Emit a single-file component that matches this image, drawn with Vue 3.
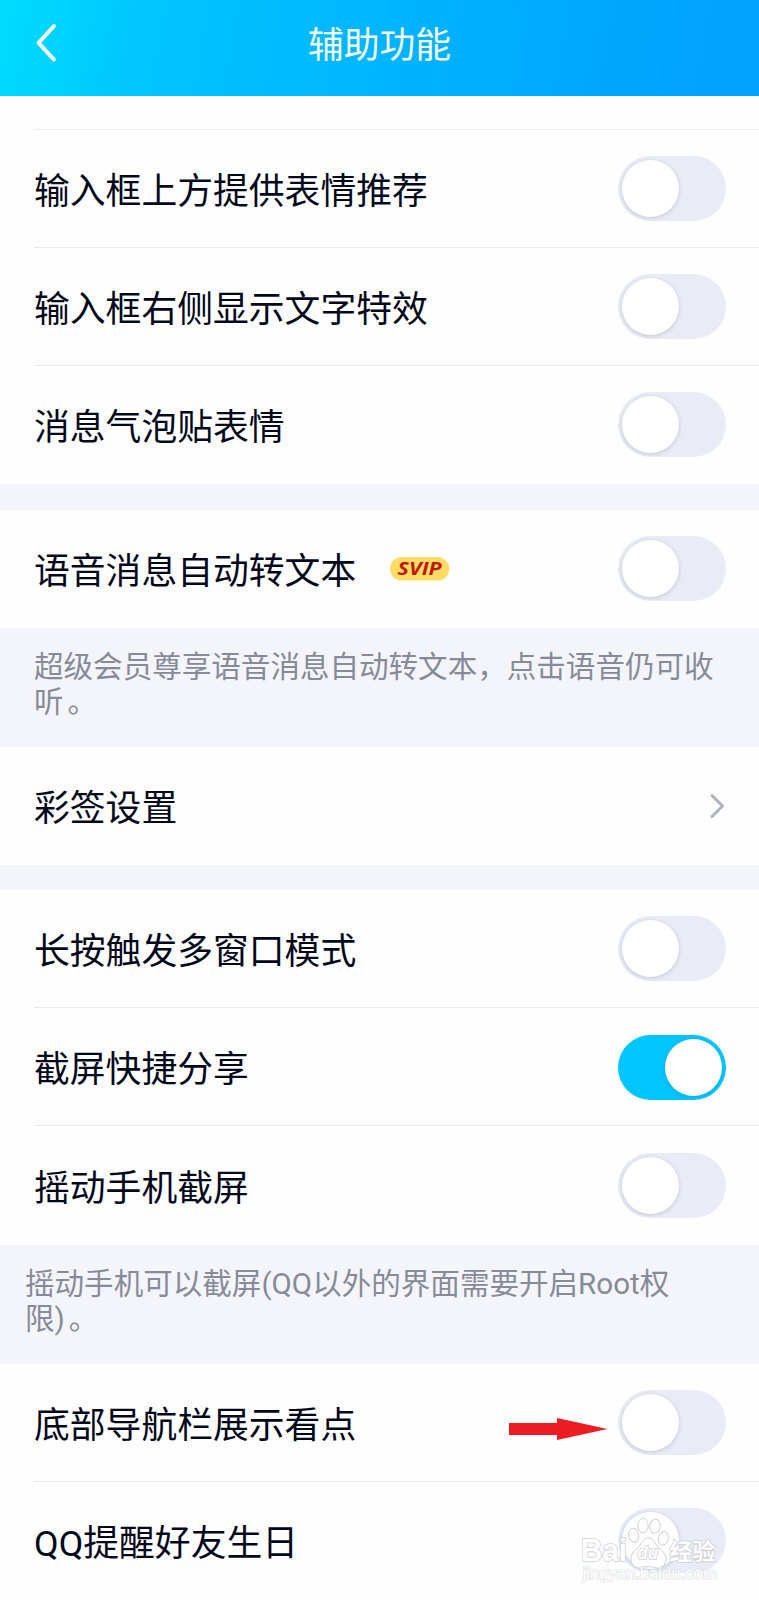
<script setup>
const sections = [
  {
    rows: [
      { label: '输入框上方提供表情推荐', line: true },
      { label: '输入框右侧显示文字特效', line: true },
      { label: '消息气泡贴表情' },
    ],
    gap: true,
  },
  {
    rows: [{ label: '语音消息自动转文本', svip: true }],
    note: ['超级会员尊享语音消息自动转文本，点击语音仍可收', '听'],
  },
  { rows: [{ label: '彩签设置', link: true }], gap: true },
  {
    rows: [
      { label: '长按触发多窗口模式', line: true },
      { label: '截屏快捷分享', on: true, line: true },
      { label: '摇动手机截屏', tall: true },
    ],
    note: ['摇动手机可以截屏(QQ以外的界面需要开启Root权', '限)'],
    wide: true,
  },
  {
    rows: [
      { label: '底部导航栏展示看点', arrow: true, line: true },
      { label: 'QQ提醒好友生日', watermark: true },
    ],
  },
]
</script>

<template>
  <div class="page">
    <header class="bar">
      <svg class="back" width="26" height="42" viewBox="0 0 26 42">
        <path d="M22 4 L6.6 20.8 L22 37.6" />
      </svg>
      <h1>辅助功能</h1>
    </header>
    <div class="top-space"><i></i></div>

    <section v-for="(s, i) in sections" :key="i">
      <div
        v-for="r in s.rows"
        :key="r.label"
        class="row"
        :class="{ line: r.line, tall: r.tall }"
      >
        <span class="label">{{ r.label }}</span>
        <svg v-if="r.svip" class="svip" width="60" height="24" viewBox="0 0 60 24">
          <rect x="0" y="0" width="59.3" height="23.6" rx="11.8" fill="#ffdc66" />
          <text x="7.6" y="18" textLength="44" lengthAdjust="spacingAndGlyphs">SVIP</text>
        </svg>
        <span class="spacer"></span>
        <svg v-if="r.arrow" class="arrow" width="99" height="24" viewBox="0 0 99 24">
          <path d="M0 6 H48 V1 L98.5 12 L48 23 V18 H0 Z" fill="#ed1c24" />
        </svg>
        <svg v-if="r.link" class="next" width="18" height="28" viewBox="0 0 18 28">
          <path d="M4 3.5 L14.5 14 L4 24.5" />
        </svg>
        <span v-else class="toggle" :class="{ on: r.on }"><b></b></span>

        <svg v-if="r.watermark" class="mark" width="142" height="76" viewBox="0 0 142 76">
          <g class="paw">
            <ellipse cx="52.7" cy="25.3" rx="5" ry="7" transform="rotate(-12 52.7 25.3)" />
            <ellipse cx="62" cy="15.6" rx="5.2" ry="7.2" />
            <ellipse cx="74" cy="16.2" rx="5.2" ry="7.2" transform="rotate(8 74 16.2)" />
            <ellipse cx="82.3" cy="28.3" rx="5" ry="6.8" transform="rotate(14 82.3 28.3)" />
            <path d="M67.3 28 C61.5 28 60.5 34.5 56.5 38 C52.5 41.5 49.5 44.5 50 50 C51 57 56 59 61 57.5 C65.5 56.3 69 56.3 73.5 57.5 C79 59 84 57 85 50 C85.5 44.5 82 41.5 78 38 C74 34.5 73 28 67.3 28 Z" />
          </g>
          <text class="brand" x="0" y="50.5" textLength="46" lengthAdjust="spacingAndGlyphs">Bai</text>
          <text class="du" x="56.5" y="48.7" textLength="20.5" lengthAdjust="spacingAndGlyphs">du</text>
          <text class="cn" x="88.5" y="49.5" textLength="46" lengthAdjust="spacingAndGlyphs">经验</text>
          <text class="url" x="1.5" y="68.5" textLength="134" lengthAdjust="spacingAndGlyphs">jingyan.baidu.com</text>
        </svg>
      </div>
      <div v-if="s.note" class="note" :class="{ wide: s.wide }">
        <p>{{ s.note[0] }}</p>
        <p>{{ s.note[1] }}<span class="stop">。</span></p>
      </div>
      <div v-if="s.gap" class="gap" :class="{ first: i === 0 }"></div>
    </section>
  </div>
</template>

<style>
html,
body {
  margin: 0;
  overflow: hidden;
}
</style>

<style scoped>
.page {
  width: 759px;
  height: 1600px;
  overflow: hidden;
  background: #fefefe;
  color: #03081a;
  font-family: Roboto, 'Noto Sans CJK SC', sans-serif;
}
.bar {
  height: 96px;
  box-sizing: border-box;
  display: grid;
  grid-template-columns: 120px 1fr 120px;
  align-items: center;
  background: linear-gradient(100deg, #00dcff 0%, #00c5ff 20%, #00b6ff 48%, #00a6ff 80%, #00a3ff 100%);
}
.back {
  margin: -11px 0 0 32px;
}
.back path {
  fill: none;
  stroke: #f2fdff;
  stroke-width: 4;
  stroke-linecap: round;
  stroke-linejoin: round;
}
.bar h1 {
  margin: 0;
  padding-bottom: 4px;
  text-align: center;
  font-size: 35.8px;
  line-height: 52px;
  font-weight: 400;
  color: #f4fdff;
}
.top-space {
  height: 34px;
  display: flex;
  align-items: flex-end;
}
.top-space i {
  flex: 1;
  margin-left: 34px;
  height: 1px;
  background: #e9e9eb;
}
.row {
  position: relative;
  height: 118px;
  box-sizing: border-box;
  margin-left: 34px;
  padding-right: 33.5px;
  display: flex;
  align-items: center;
  border-bottom: 1px solid transparent;
}
.row.line {
  border-bottom-color: #e8e8ea;
}
.row.tall {
  height: 119px;
}
.label {
  font-size: 35.8px;
  line-height: 52px;
  padding-top: 7px;
  white-space: nowrap;
}
.spacer {
  flex: 1;
}
.svip {
  margin-left: 34px;
}
.svip text {
  font: italic 700 17.4px 'Open Sans', 'Noto Sans', sans-serif;
  fill: #c0180c;
}
.arrow {
  margin-right: 10.5px;
  margin-top: 13px;
}
.next path {
  fill: none;
  stroke: #afb2bd;
  stroke-width: 3;
  stroke-linecap: round;
  stroke-linejoin: round;
}
.toggle {
  width: 107.5px;
  height: 65px;
  box-sizing: border-box;
  padding: 4px;
  border-radius: 33px;
  background: #e9ecf6;
  display: flex;
  overflow: hidden;
}
.toggle b {
  width: 57px;
  height: 57px;
  border-radius: 50%;
  background: #fff;
  box-shadow: 0 1px 4px rgba(70, 75, 110, 0.24);
}
.toggle.on {
  margin-top: 1px;
  background: #00c6ff;
  justify-content: flex-end;
}
.note {
  height: 119px;
  box-sizing: border-box;
  padding: 22px 0 0 34px;
  background: #f4f5fa;
  color: #878b99;
  font-size: 29.55px;
}
.note.wide {
  padding-left: 25px;
}
.note p {
  margin: 0;
  height: 35px;
  line-height: 35px;
  white-space: nowrap;
}
.stop {
  margin-left: 4px;
}
.gap {
  height: 25px;
  background: #f4f5fa;
}
.gap.first {
  height: 26px;
}
.mark {
  position: absolute;
  left: 547px;
  top: 28px;
}
.paw ellipse,
.paw path {
  fill: rgba(255, 255, 255, 0.9);
  stroke: #d0d1d6;
  stroke-width: 1;
}
.mark text {
  fill: #fff;
  stroke: #cfd0d6;
  stroke-width: 1.6;
  paint-order: stroke;
}
.brand {
  font: 700 32px 'Liberation Sans', sans-serif;
}
.mark .du {
  font: italic 700 18px 'Liberation Sans', sans-serif;
}
.cn {
  font: 700 23px 'Noto Sans CJK SC', sans-serif;
}
.mark .url {
  font: 400 16px 'Liberation Sans', sans-serif;
  stroke: #dddee3;
  stroke-width: 1.2;
}
</style>
